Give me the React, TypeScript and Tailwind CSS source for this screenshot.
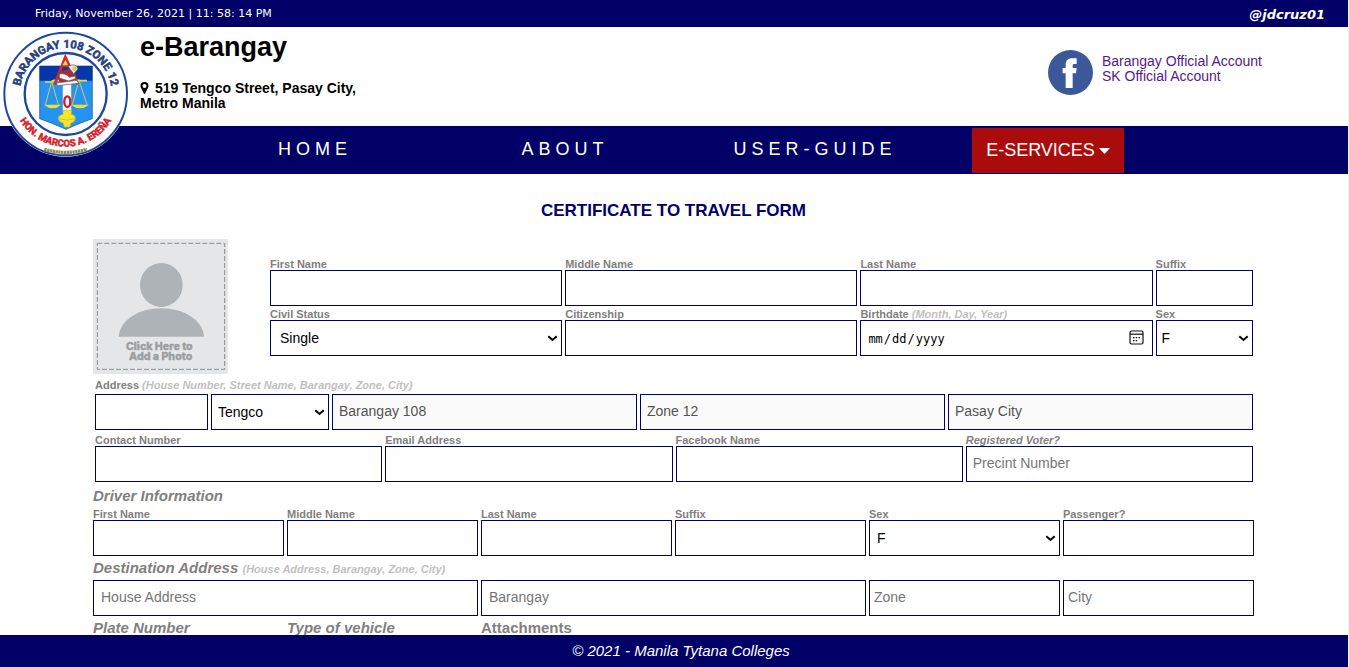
import React, { useId } from "react";

const control =
  "block h-9 w-full appearance-none rounded-none border border-[#000066] bg-white text-[14px] text-black placeholder:text-[#757575] placeholder:opacity-100 focus:outline-none disabled:bg-[#fafafa] disabled:text-[#545454]";
const labelText = "block h-[14px] text-[11px] leading-4 font-bold text-[#808080] whitespace-nowrap";
const hintText = "text-[11px] leading-none font-bold italic text-[#bfbfbf]";
const heading = "block h-6 text-[15px] leading-6 font-bold italic text-[#808080] whitespace-nowrap";

function Chevron() {
  return (
    <svg
      className="pointer-events-none absolute top-1/2 right-1 -mt-[3px] h-[7px] w-[11px]"
      viewBox="0 0 11 7"
      fill="none"
      aria-hidden="true"
    >
      <path d="M1.3 1.2 5.5 5l4.2-3.8" stroke="#000" strokeWidth="2" />
    </svg>
  );
}

type SelectBoxProps = {
  id?: string;
  ariaLabel?: string;
  options: string[];
  padding?: string;
};

function SelectBox({ id, ariaLabel, options, padding = "pl-[7px]" }: SelectBoxProps) {
  return (
    <div className="relative">
      <select id={id} aria-label={ariaLabel} className={`${control} ${padding} pr-5`}>
        {options.map((o) => (
          <option key={o}>{o}</option>
        ))}
      </select>
      <Chevron />
    </div>
  );
}

type FieldProps = {
  label: string;
  hint?: string;
  italic?: boolean;
  type?: string;
  placeholder?: string;
  options?: string[];
  padding?: string;
};

function Field({ label, hint, italic, type = "text", placeholder, options, padding }: FieldProps) {
  const id = useId();
  return (
    <div className="min-w-0">
      <label htmlFor={id} className={`${labelText} ${italic ? "italic" : ""}`}>
        {label} {hint && <span className={hintText}>{hint}</span>}
      </label>
      {options ? (
        <SelectBox id={id} options={options} padding={padding} />
      ) : (
        <input id={id} type={type} placeholder={placeholder} className={`${control} px-[6px] pb-[2px]`} />
      )}
    </div>
  );
}

function DateField() {
  const id = useId();
  return (
    <div className="min-w-0">
      <label htmlFor={id} className={labelText}>
        Birthdate <span className={hintText}>(Month, Day, Year)</span>
      </label>
      <div className="relative">
        <input
          id={id}
          type="date"
          className="block h-9 w-full rounded-none border border-[#000066] bg-white px-[6px] pt-[2px] font-['DejaVu_Sans_Mono',monospace] text-[12px] text-black focus:outline-none [&::-webkit-calendar-picker-indicator]:opacity-0"
        />
        <svg
          className="pointer-events-none absolute top-1/2 right-[9px] -mt-[8px] h-[15px] w-[15px]"
          viewBox="0 0 15 15"
          fill="none"
          aria-hidden="true"
        >
          <rect x="1" y="1" width="13" height="13" rx="1.5" stroke="#111" strokeWidth="1.2" />
          <path d="M1 4.2h13" stroke="#111" strokeWidth="1.2" />
          <path
            d="M4 7h1.500v1.300H4zM6.700 7h1.500v1.300H6.700zM9.500 7H11v1.300H9.500zM4 9.900h1.500v1.300H4zM6.700 9.900h1.500v1.300H6.700z"
            fill="#111"
          />
        </svg>
      </div>
    </div>
  );
}

function Seal() {
  return (
    <svg
      className="absolute top-[-1px] left-0 z-10 h-[134px] w-[132px]"
      viewBox="0 0 396 402"
      role="img"
      aria-label="Barangay 108 Zone 12 seal"
    >
      <defs>
        <path id="sealTop" d="M65 244a138 138 0 1 1 264 0" />
        <path id="sealBottom" d="M47 150a159 159 0 1 0 300 0" />
      </defs>
      <circle cx="197" cy="204" r="188" fill="#fff" />
      <circle cx="197" cy="204" r="184" fill="none" stroke="#1d479f" strokeWidth="6" />
      <circle cx="197" cy="204" r="123" fill="none" stroke="#1d479f" strokeWidth="7" />
      <g fontFamily="Roboto, Liberation Sans, sans-serif" fontWeight="700" textAnchor="middle">
        <text fill="#243f80" stroke="#243f80" strokeWidth="1.500" fontSize="34">
          <textPath href="#sealTop" startOffset="50%">BARANGAY 108 ZONE 12</textPath>
        </text>
        <text fill="#d8202a" stroke="#d8202a" strokeWidth="1.500" fontSize="29">
          <textPath href="#sealBottom" startOffset="50%">HON. MARCOS A. EREÑA</textPath>
        </text>
      </g>
      <path d="M133 370q64 18 128 0" fill="none" stroke="#8d8850" strokeWidth="10" strokeDasharray="7 1.5" />
      <path d="M119 120h158v158q-40 14-79 32-40-18-79-32z" fill="#2493f2" stroke="#184f92" strokeWidth="2" />
      <path d="M119 120h158v44H119z" fill="#0637a8" />
      <path d="M135 168h28M233 164h28" stroke="#f1dc35" strokeWidth="5" />
      <path d="M155 167l-19 69M155 167l20 69M237 163l-20 73M237 163l24 73" stroke="#d7ca50" strokeWidth="3" fill="none" />
      <path d="M132 236h52q-26 22-52 0zM213 236h54q-27 22-54 0z" fill="#f3df2c" />
      <path d="M188 172h26v84h-26z" fill="#fff" stroke="#8294a5" strokeWidth="2" />
      <path d="M155 165q24-8 44 8 18-12 40-10" fill="none" stroke="#f1dc35" strokeWidth="5" />
      <path d="M164 175l32-82 38 82" fill="none" stroke="#d32d26" strokeWidth="8" />
      <path d="M180 124l17-28 16 28z" fill="#c62828" />
      <path d="M187 118l10-16 7 16z" fill="#f2d94a" />
      <path d="M170 140l37-12 24 20-10 20h-43z" fill="#a82b38" />
      <path d="M204 121q25-12 30 8l-13 15z" fill="#e9eef5" stroke="#3d4b78" strokeWidth="2" />
      <circle cx="224" cy="128" r="7" fill="#f3c63a" />
      <path d="M178 144q19-4 30 10l18-4v8l-20 7-28-9z" fill="#f6f6f6" stroke="#555" strokeWidth="2" />
      <path d="M169 171l62-8 5 9-63 7z" fill="#f5f5f5" stroke="#5a5560" strokeWidth="2" />
      <ellipse cx="202" cy="227" rx="9" ry="16" fill="#f7fafc" stroke="#d41922" strokeWidth="7" />
      <path
        d="M189 253h25v12q13 3 12 13-1 10-13 13l-4 12h-16l-4-12q-13-3-14-13 0-10 14-13z"
        fill="#f7e52b"
        stroke="#c7b01e"
        strokeWidth="2"
      />
      <path d="M176 278q25 9 49 0" fill="none" stroke="#c7b01e" strokeWidth="2" />
    </svg>
  );
}

function TopBar() {
  return (
    <div className="flex h-[27px] items-center justify-between bg-[#000066] pt-[2px] pr-[23px] pl-[35px] font-['DejaVu_Sans',sans-serif] text-white">
      <span className="text-[11px]">Friday, November 26, 2021 | 11: 58: 14 PM</span>
      <span className="text-[13px] font-bold italic">@jdcruz01</span>
    </div>
  );
}

function Header() {
  return (
    <header className="relative flex h-[99px] justify-between pr-[86px] pl-[140px]">
      <Seal />
      <div>
        <h1 className="pt-1 text-[27px] leading-8 font-bold text-black">e-Barangay</h1>
        <p className="mt-[18px] text-[14px] leading-[15px] font-bold text-black">
          <svg className="mr-[6px] inline-block h-[12px] w-[9px] align-[-1px]" viewBox="0 0 9 12" aria-hidden="true">
            <path
              fillRule="evenodd"
              d="M4.5 0a4 4 0 0 0-4 4c0 1 .3 1.500.7 2.300L3.700 11.300q.8 1.200 1.600 0l2.500-5c.4-.8.7-1.300.7-2.300a4 4 0 0 0-4-4Zm0 2a2 2 0 1 1 0 4 2 2 0 0 1 0-4Z"
            />
          </svg>
          519 Tengco Street, Pasay City,
          <br />
          Metro Manila
        </p>
      </div>
      <div className="flex items-start gap-[9px] pt-[23px]">
        <svg className="h-[45px] w-[45px]" viewBox="0 0 135 135" aria-hidden="true">
          <circle cx="67.500" cy="67.500" r="67.500" fill="#3b5998" />
          <path
            d="M53 114V70H44V54h9V45c0-14 7-20 20-20h13v17h-7c-4 0-5 2-5 5v7h12l-2 16H74v44Z"
            fill="#fff"
          />
        </svg>
        <div className="flex flex-col pt-1 text-[14px] leading-[15px] text-[#551a8b]">
          <a href="#barangay">Barangay Official Account</a>
          <a href="#sk">SK Official Account</a>
        </div>
      </div>
    </header>
  );
}

function Nav() {
  const link = "flex-1 pb-px text-center text-[18px] tracking-[5px] text-white";
  return (
    <nav className="flex h-12 items-center bg-[#000066] pr-[224px] pl-[190px]">
      <a href="#home" className={link}>HOME</a>
      <a href="#about" className={link}>ABOUT</a>
      <a href="#guide" className={link}>USER-GUIDE</a>
      <button
        type="button"
        className="mt-px ml-8 flex h-[45px] w-[152px] shrink-0 items-center justify-center gap-1 rounded-[1px] bg-[#aa0c0c] text-[18px] text-white"
      >
        E-SERVICES
        <svg className="h-[6px] w-[11px]" viewBox="0 0 11 6" aria-hidden="true">
          <path d="M0 0h11L5.500 6Z" fill="#fff" />
        </svg>
      </button>
    </nav>
  );
}

function PhotoButton() {
  return (
    <button type="button" className="block h-[135px] w-[135px] shrink-0">
      <svg className="h-full w-full" viewBox="0 0 405 405">
        <rect width="405" height="405" fill="#e4e6e8" />
        <rect x="13" y="13" width="382" height="378" fill="none" stroke="#8b8d8f" strokeWidth="3" strokeDasharray="15 6" />
        <ellipse cx="205" cy="138" rx="64" ry="66" fill="#adb3b7" />
        <path d="M77 293c4-50 60-85 128-85s124 35 128 85Z" fill="#adb3b7" />
        <g
          fill="#9b9d9f"
          stroke="#9b9d9f"
          strokeWidth="1"
          fontFamily="Inter, sans-serif"
          fontSize="32"
          fontWeight="800"
          textAnchor="middle"
        >
          <text x="199" y="334">Click Here to</text>
          <text x="203" y="363">Add a Photo</text>
        </g>
      </svg>
    </button>
  );
}

const sexes = ["F", "M"];

export default function App() {
  return (
    <div className="min-h-screen border-r border-[#f0f0f0] bg-white font-['Liberation_Sans',Arial,sans-serif]">
      <TopBar />
      <Header />
      <Nav />
      <main className="pr-[94px] pl-[93px]">
        <h2 className="pt-[25px] text-center text-[17px] leading-6 font-bold text-[#000066]">
          CERTIFICATE TO TRAVEL FORM
        </h2>
        <form className="pt-4">
          <div className="flex gap-[42px] pr-px">
            <PhotoButton />
            <div className="grid flex-1 grid-cols-[3fr_3fr_3fr_1fr] content-start gap-x-[3px] pt-[17px]">
              <Field label="First Name" />
              <Field label="Middle Name" />
              <Field label="Last Name" />
              <Field label="Suffix" />
              <Field label="Civil Status" options={["Single", "Married", "Widowed"]} padding="pl-[9px]" />
              <Field label="Citizenship" />
              <DateField />
              <Field label="Sex" options={sexes} padding="pl-[5px]" />
            </div>
          </div>

          <div className="pt-[3px] pr-px pl-[2px]">
            <label htmlFor="house" className={labelText}>
              Address <span className={hintText}>(House Number, Street Name, Barangay, Zone, City)</span>
            </label>
            <div className="mt-[3px] grid grid-cols-[113px_118px_1fr_1fr_1fr] gap-x-[3px]">
              <input id="house" type="text" className={`${control} px-[6px] pb-[2px]`} />
              <SelectBox ariaLabel="Street" options={["Tengco"]} padding="pl-[6px]" />
              <input aria-label="Barangay" disabled defaultValue="Barangay 108" className={`${control} px-[6px] pb-[2px]`} />
              <input aria-label="Zone" disabled defaultValue="Zone 12" className={`${control} px-[6px] pb-[2px]`} />
              <input aria-label="City" disabled defaultValue="Pasay City" className={`${control} px-[6px] pb-[2px]`} />
            </div>
            <div className="mt-[2px] grid grid-cols-4 gap-x-[3px]">
              <Field label="Contact Number" type="tel" />
              <Field label="Email Address" type="email" />
              <Field label="Facebook Name" />
              <Field label="Registered Voter?" italic placeholder="Precint Number" />
            </div>
          </div>

          <div className="pt-[2px]">
            <h3 className="h-[22px] text-[15px] leading-6 font-bold text-[#808080] italic">Driver Information</h3>
          </div>
          <div className="grid grid-cols-6 gap-x-[3px]">
            <Field label="First Name" />
            <Field label="Middle Name" />
            <Field label="Last Name" />
            <Field label="Suffix" />
            <Field label="Sex" options={sexes} />
            <Field label="Passenger?" />
          </div>

          <h3 className={heading}>
            Destination Address <span className={hintText}>(House Address, Barangay, Zone, City)</span>
          </h3>
          <div className="grid grid-cols-6 gap-x-[3px]">
            <input aria-label="House Address" placeholder="House Address" className={`${control} col-span-2 px-[7px] pb-[2px]`} />
            <input aria-label="Barangay of destination" placeholder="Barangay" className={`${control} col-span-2 px-[7px] pb-[2px]`} />
            <input aria-label="Zone of destination" placeholder="Zone" className={`${control} px-1 pb-[2px]`} />
            <input aria-label="City of destination" placeholder="City" className={`${control} px-1 pb-[2px]`} />
          </div>

          <div className="grid grid-cols-6 gap-x-[3px]">
            <h3 className={heading}>Plate Number</h3>
            <h3 className={heading}>Type of vehicle</h3>
            <h3 className="text-[15px] leading-6 font-bold text-[#808080]">Attachments</h3>
          </div>
        </form>
      </main>
      <footer className="fixed right-px bottom-0 left-0 flex h-8 items-center justify-center bg-[#000066] pl-[14px] text-[15px] text-white italic">
        © 2021 - Manila Tytana Colleges
      </footer>
    </div>
  );
}
